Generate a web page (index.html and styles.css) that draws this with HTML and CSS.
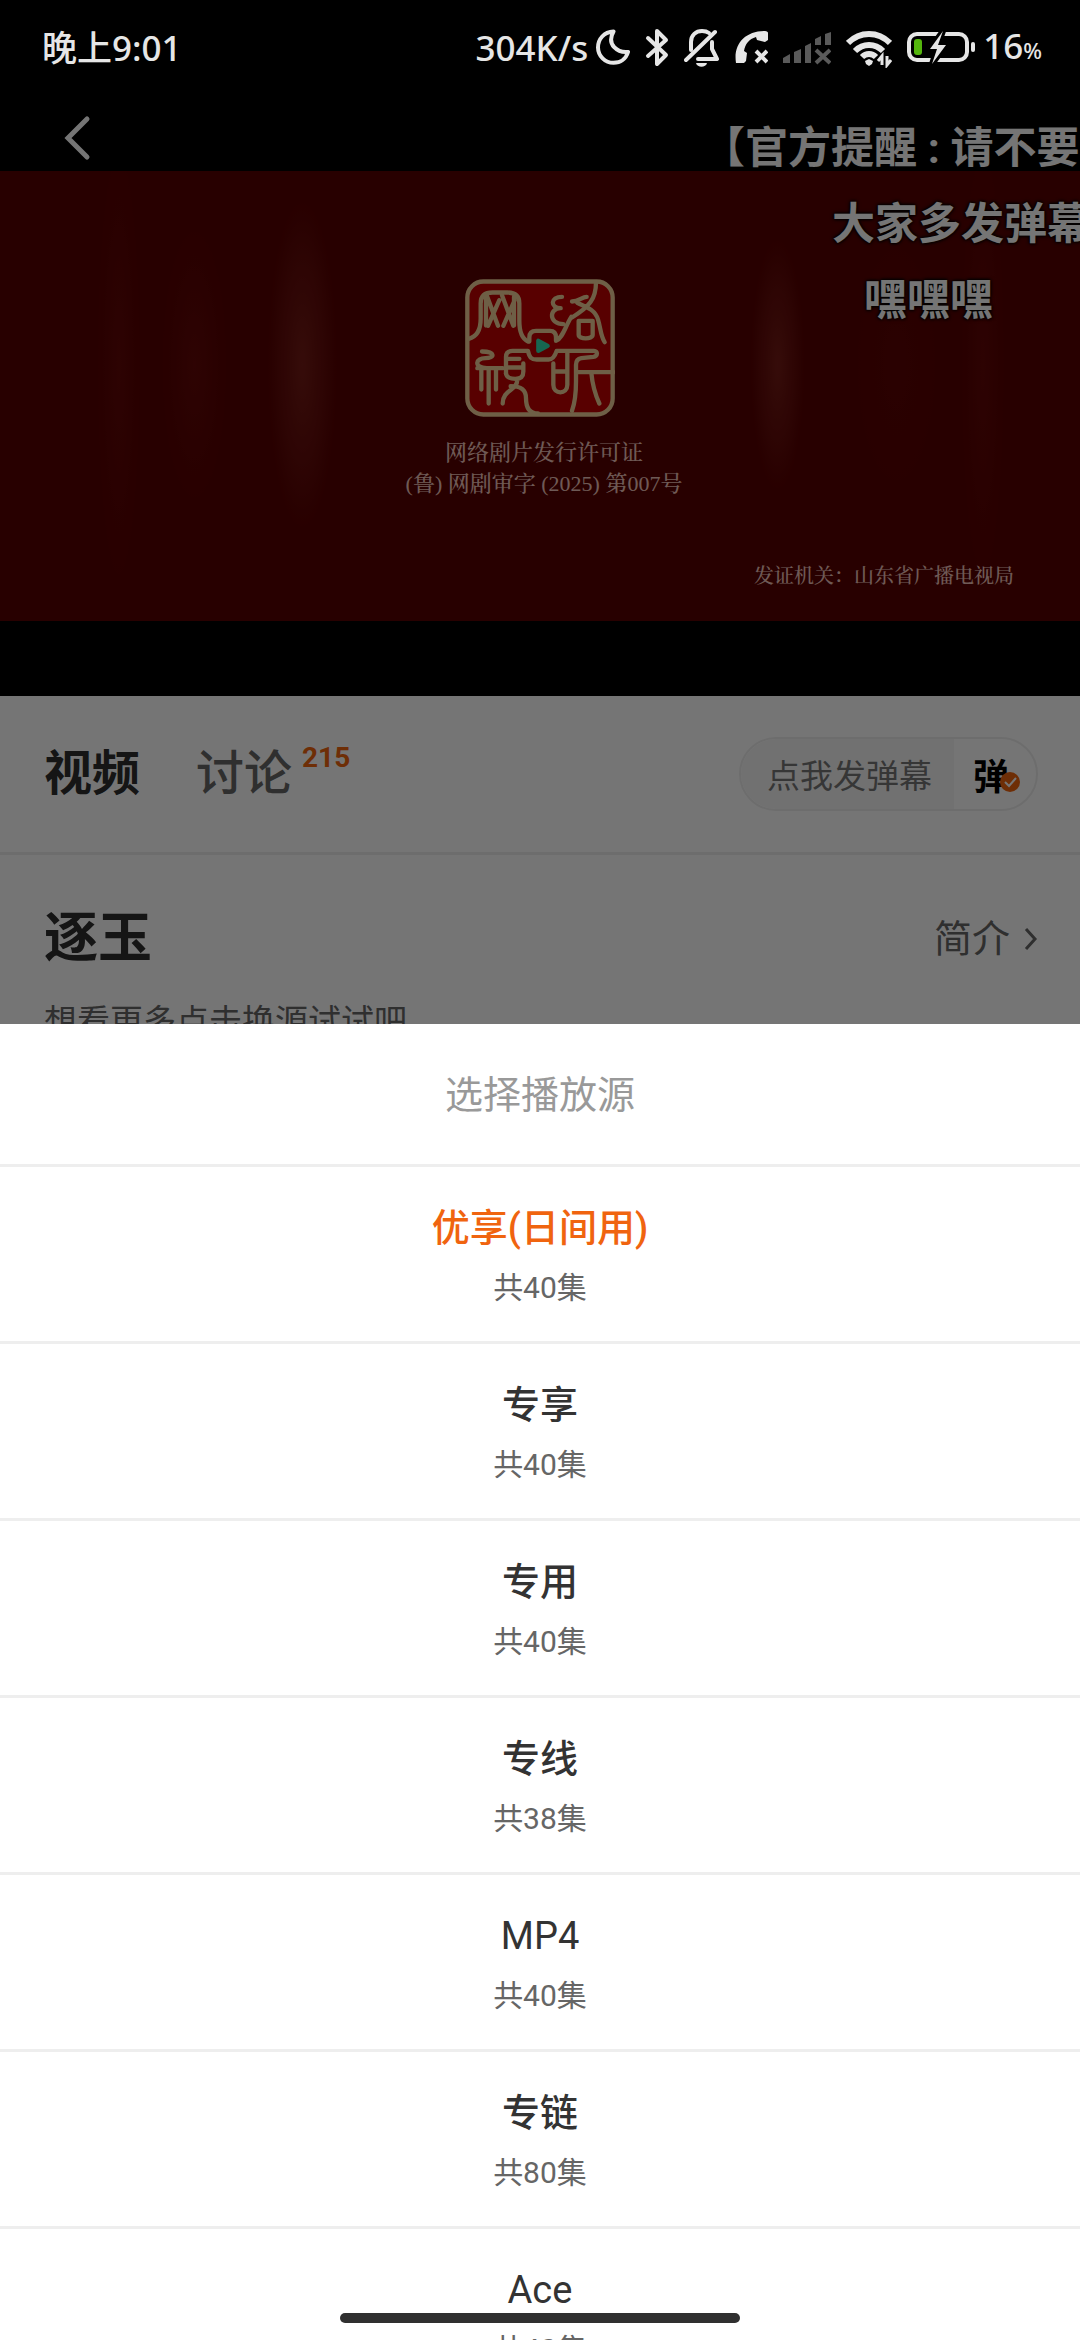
FILE: index.html
```html
<!DOCTYPE html>
<html lang="zh-CN">
<head>
  <meta charset="UTF-8">
  <meta name="viewport" content="width=device-width, initial-scale=1">
  <title>逐玉</title>
  <link rel="stylesheet" href="styles.css">
</head>
<body>

  <header class="status">
    <span class="status-time">晚上9:01</span>
    <div class="status-right">
      <span class="status-speed">304K/s</span>
      <div class="status-icons">
        <!-- moon -->
        <svg width="34" height="40" viewBox="0 0 34 40" fill="none" stroke="currentColor" stroke-width="4" stroke-linejoin="round"><path d="M17.500 3.500C8 4 2 11 2 19.500a15.500 15.500 0 0 0 15.500 15.300c7 0 12.500-4 14.500-10.800C22 25 10 17 17.500 3.500Z"/></svg>
        <!-- bluetooth -->
        <svg width="24" height="40" viewBox="0 0 24 40" fill="none" stroke="currentColor" stroke-width="4" stroke-linejoin="round" stroke-linecap="round"><path d="M3 10 21 27 12 36V3l9 9L3 28"/></svg>
        <!-- muted bell -->
        <svg width="35" height="40" viewBox="0 0 35 40" fill="none" stroke="currentColor" stroke-width="4" stroke-linecap="round" stroke-linejoin="round"><path d="M2 32 31 4"/><path d="M7 22V14C7 7 12 3 18 3c3 0 5 .5 7 2"/><path d="M28 14v7l5 10H14"/><path d="M12 35h11c-1 5-10 5-11 0Z" fill="currentColor" stroke="none"/></svg>
        <!-- call off -->
        <svg width="34" height="40" viewBox="0 0 34 40" fill="currentColor"><path d="M2 35C-1 16 11 3 31 3c2 0 3 1 3 2v7l-3 2-8-2-1-3c-7 2-11 7-12 14l3 2-1 8-2 2Z"/><path d="m22 23 11 11m0-11L22 34" stroke="currentColor" stroke-width="4"/></svg>
        <!-- signal -->
        <svg class="icon-dim" width="48" height="40" viewBox="0 0 48 40" fill="currentColor"><path d="M0 30l7-4v9H0ZM11 24l7-3v14h-7ZM22 18l6-3v20h-6ZM32 11l6-3v9h-6ZM42 6l6-2v13h-6Z"/><path d="m33 22 14 13m0-13L33 35" stroke="currentColor" stroke-width="4"/></svg>
        <!-- wifi -->
        <svg width="46" height="40" viewBox="0 0 46 40" fill="none" stroke="currentColor" stroke-width="6"><path d="M2 15C14 3 32 3 44 15M9 23c8-8 20-8 28 0M16 29c4-4 10-4 14 0"/><path d="m19 33 4-2 4 2-1 3-3 2-3-2Z" fill="currentColor" stroke="none"/><path d="M36 37V28l-4 5M41 28v9l4-5" stroke-width="3"/></svg>
        <!-- battery -->
        <svg width="68" height="40" viewBox="0 0 68 40"><rect x="2" y="6" width="58" height="26" rx="8" fill="none" stroke="currentColor" stroke-width="4"/><rect x="64" y="14" width="4" height="10" rx="2" fill="currentColor"/><rect x="7" y="11" width="8" height="16" rx="3" fill="#54b60d"/><path d="M36 3 23 21h7l-5 15 14-19h-8Z" fill="currentColor" stroke="#000" stroke-width="6" paint-order="stroke"/></svg>
      </div>
      <span class="status-battery">16<small>%</small></span>
    </div>
  </header>

  <main class="page">
    <section class="player">
      <button class="back" aria-label="返回">
        <svg width="28" height="46" viewBox="0 0 28 46" fill="none" stroke="currentColor" stroke-width="5" stroke-linecap="round"><path d="M23 4 4 23l19 19"/></svg>
      </button>

      <div class="film">
        <svg class="seal" viewBox="75 57 450 413" fill="none" stroke-width="13" stroke-linecap="round" stroke-linejoin="round">
          <rect class="seal-bg" x="82" y="64" width="436" height="399" rx="48"/>
          <path d="M86 236c24-6 36-24 36-60v-46c0-22 12-33 36-33h44c24 0 36 11 36 33v52c0 32 8 54 26 62"/>
          <path d="M140 105l34 92M178 120l-34 77M186 105l34 92M224 120l-34 77M138 110v86M222 110v86"/>
          <path d="M268 244v-12c0-14 8-20 20-20h42c12 0 18 6 18 20v10c20-8 28-44 46-72"/>
          <path d="M366 110c-36 0-36 34-4 34M362 144c-36 0-36 48 8 48M468 66c0 50-20 74-72 106M396 124c20 0 30-14 44-14M412 128c18 10 52 16 62 50 8 26 8 50 20 68M416 182v42c0 14 42 14 42 0v-42Z"/>
          <path d="M140 324c-40-2-34-30-4-30 30 0 30-20-10-20M112 324h76M124 326v62M146 326v104M168 326v62"/>
          <path d="M198 340v-50c0-12 8-18 20-18h46c4 20 10 26 26 26h36c12 0 18-8 24-26h112c12 0 12 16-2 18l-36 4c-12 2-16 8-16 20v50c0 40-2 60-12 88"/>
          <path d="M202 296h36M200 322h48M250 310v24c0 16-8 22-24 22-16 0-26-4-28-16M232 358c0 34-44 30-44 72M212 378c30 0 46 10 46 36 0 28 10 46 36 46"/>
          <path d="M340 310v64c0 30 42 30 42 0V274M342 334h38M412 336h108M454 338c4 44 14 70 24 92"/>
          <path class="seal-play" d="M295 242v30l28-15Z"/>
        </svg>
        <p class="license">网络剧片发行许可证<br>(鲁) 网剧审字 (2025) 第007号</p>
        <p class="issuer">发证机关：山东省广播电视局</p>
      </div>

      <div class="danmaku lane-1">【官方提醒 : 请不要相</div>
      <div class="danmaku lane-2">大家多发弹幕</div>
      <div class="danmaku lane-3">嘿嘿嘿</div>
    </section>

    <nav class="tabs">
      <button class="tab active">视频</button>
      <button class="tab">讨论<sup>215</sup></button>
      <div class="send">
        <button class="send-text">点我发弹幕</button>
        <button class="send-toggle">弹<svg width="22" height="22" viewBox="0 0 22 22"><circle cx="11" cy="11" r="10"/><path d="m6 11 4 4 7-8"/></svg></button>
      </div>
    </nav>

    <section class="info">
      <div class="info-head">
        <h1>逐玉</h1>
        <a class="intro" href="#">简介<svg width="14" height="24" viewBox="0 0 14 24" fill="none" stroke="currentColor" stroke-width="3"><path d="m2 2 9 10-9 10"/></svg></a>
      </div>
      <p class="tip">想看更多点击换源试试吧</p>
    </section>
  </main>

  <div class="mask"></div>

  <section class="sheet">
    <h2>选择播放源</h2>
    <ul>
      <li><button class="source selected"><span>优享(日间用)</span><small>共40集</small></button></li>
      <li><button class="source"><span>专享</span><small>共40集</small></button></li>
      <li><button class="source"><span>专用</span><small>共40集</small></button></li>
      <li><button class="source"><span>专线</span><small>共38集</small></button></li>
      <li><button class="source"><span class="latin">MP4</span><small>共40集</small></button></li>
      <li><button class="source"><span>专链</span><small>共80集</small></button></li>
      <li><button class="source"><span class="latin">Ace</span><small>共40集</small></button></li>
    </ul>
  </section>

  <div class="home-bar"></div>

</body>
</html>
```

FILE: styles.css
```css
* {
  box-sizing: border-box;
}

body {
  margin: 0;
  position: relative;
  height: 100vh;
  overflow: hidden;
  background: #000;
  color: #333;
  font-family: Roboto, "Noto Sans CJK SC", sans-serif;
}

h1, h2, p, ul {
  margin: 0;
  padding: 0;
}

ul {
  list-style: none;
}

svg {
  display: block;
}

button {
  padding: 0;
  border: none;
  background: none;
  color: inherit;
  font: inherit;
  cursor: pointer;
}

/* status bar, stays above the mask */
.status {
  position: relative;
  z-index: 2;
  display: flex;
  align-items: center;
  justify-content: space-between;
  height: 96px;
  padding: 0 38px 0 42px;
  color: #e6e6e6;
  font-family: "Noto Sans", "Noto Sans CJK SC", sans-serif;
  font-size: 35px;
  font-weight: 500;
  line-height: 40px;
}

.status-right {
  display: flex;
  align-items: center;
  gap: 8px;
}

.status-icons {
  display: flex;
  gap: 15px;
}

.icon-dim {
  color: #5a5a5a;
}

.status-battery small {
  font-size: 22px;
}

/* player */
.page {
  background: #fff;
}

.player {
  position: relative;
  display: flex;
  align-items: center;
  aspect-ratio: 9 / 5;
  overflow: hidden;
  background: #000;
}

.back {
  position: absolute;
  top: 19px;
  left: 64px;
  color: #fff;
}

.film {
  display: flex;
  flex-direction: column;
  align-items: center;
  width: 100%;
  aspect-ratio: 12 / 5;
  padding: 108px 66px 30px;
  background:
    radial-gradient(36px 170px at 28% 43%, rgba(255, 150, 120, 0.18), transparent),
    radial-gradient(36px 150px at 18% 43%, rgba(255, 100, 90, 0.08), transparent),
    radial-gradient(24px 240px at 11% 43%, rgba(255, 100, 90, 0.07), transparent),
    radial-gradient(28px 130px at 72% 43%, rgba(255, 150, 120, 0.18), transparent),
    radial-gradient(50px 150px at 83% 43%, rgba(255, 100, 90, 0.04), transparent),
    radial-gradient(24px 240px at 91% 43%, rgba(255, 100, 90, 0.07), transparent),
    #570000;
  color: #f0c4bc;
  font-family: "Liberation Serif", "Noto Serif CJK SC", "Noto Sans CJK SC", serif;
  font-weight: 500;
}

.seal {
  width: 150px;
  height: 138px;
  stroke: #f0cf98;
}

.seal-bg {
  fill: #c00000;
}

.seal-play {
  fill: #30e0b0;
  stroke: #30e0b0;
}

.license {
  margin-top: 20px;
  padding-left: 8px;
  font-size: 22px;
  line-height: 31px;
  text-align: center;
}

.issuer {
  align-self: flex-end;
  margin-top: auto;
  font-size: 20px;
  line-height: 30px;
}

.danmaku {
  position: absolute;
  color: #fff;
  font-size: 43px;
  font-weight: 700;
  line-height: 60px;
  white-space: nowrap;
  text-shadow: 0 0 3px #000, 0 0 3px #000, 0 0 4px #000;
}

.lane-1 {
  top: 22px;
  left: 702px;
}

.lane-2 {
  top: 98px;
  left: 832px;
}

.lane-3 {
  top: 174px;
  left: 864px;
}

/* tabs */
.tabs {
  display: flex;
  align-items: center;
  gap: 56px;
  height: 159px;
  padding: 0 42px 0 44px;
  border-bottom: 3px solid #eee;
}

.tab {
  display: flex;
  gap: 10px;
  color: #666;
  font-size: 48px;
  font-weight: 500;
  line-height: 64px;
}

.tab.active {
  color: #2e2e2e;
  font-weight: 700;
}

.tab sup {
  color: #f0640f;
  font-size: 28px;
  font-weight: 700;
  line-height: 32px;
}

.send {
  display: flex;
  height: 74px;
  margin-left: auto;
  overflow: hidden;
  border: 2px solid #eee;
  border-radius: 37px;
}

.send-text {
  padding: 0 22px 0 26px;
  background: #f7f7f7;
  color: #777;
  font-size: 33px;
}

.send-toggle {
  position: relative;
  width: 82px;
  padding-right: 8px;
  color: #000;
  font-size: 36px;
  font-weight: 700;
}

.send-toggle svg {
  position: absolute;
  right: 15px;
  bottom: 16px;
  fill: #f0640f;
}

.send-toggle path {
  fill: none;
  stroke: #fff;
  stroke-width: 2;
}

/* title block */
.info {
  padding: 44px 42px 44px 44px;
}

.info-head {
  display: flex;
  align-items: center;
  justify-content: space-between;
}

.info h1 {
  color: #2e2e2e;
  font-size: 54px;
  line-height: 80px;
}

.intro {
  display: flex;
  align-items: center;
  gap: 14px;
  color: #666;
  font-size: 38px;
  line-height: 56px;
  text-decoration: none;
}

.tip {
  margin-top: 21px;
  color: #666;
  font-size: 33px;
  line-height: 44px;
}

.mask {
  position: absolute;
  inset: 0;
  z-index: 1;
  background: rgba(0, 0, 0, 0.54);
}

/* bottom sheet */
.sheet {
  position: absolute;
  right: 0;
  bottom: 0;
  left: 0;
  z-index: 2;
  height: 56.25vh;
  overflow: hidden;
  background: #fff;
  text-align: center;
}

.sheet h2 {
  padding-top: 2px;
  border-bottom: 3px solid #eee;
  color: #999;
  font-size: 38px;
  font-weight: 400;
  line-height: 138px;
}

.source {
  display: block;
  width: 100%;
  padding: 36px 0 32px;
  border-bottom: 3px solid #eee;
}

.source span {
  display: block;
  font-size: 38px;
  font-weight: 500;
  line-height: 50px;
}

.source .latin {
  font-weight: 400;
}

.source small {
  display: block;
  margin-top: 14px;
  color: #666;
  font-size: 30px;
  line-height: 42px;
}

.source.selected span {
  color: #f0640f;
}

.home-bar {
  position: absolute;
  right: 0;
  bottom: 17px;
  left: 0;
  z-index: 3;
  width: 37%;
  height: 10px;
  margin: 0 auto;
  border-radius: 5px;
  background: #303030;
}
```
